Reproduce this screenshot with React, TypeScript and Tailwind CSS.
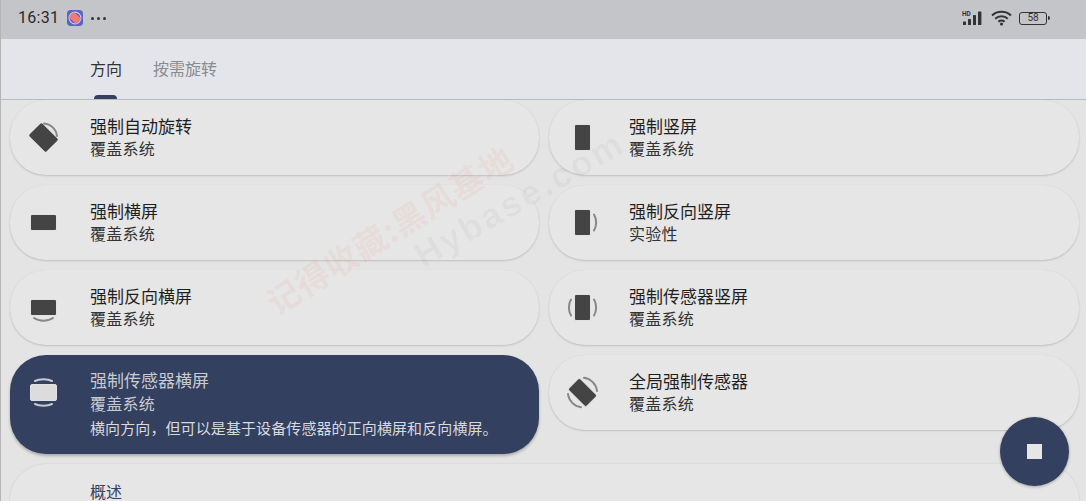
const cjk = "font-['Noto_Sans_CJK_SC','Noto_Sans',sans-serif]";

function Screen({ size, fill = "#444444" }: { size: "h" | "v"; fill?: string }) {
  const rect = size === "h" ? { x: 3.5, y: 8.5, width: 26, height: 16 } : { x: 8.5, y: 3.5, width: 16, height: 26 };
  return <rect {...rect} rx="1.5" fill={fill} stroke="#f6f6f6" strokeWidth="0.8" />;
}

function Arc({ d, color = "#888888" }: { d: string; color?: string }) {
  return <path d={d} fill="none" stroke={color} strokeWidth="2" strokeLinecap="round" />;
}

function OrientationIcon({ name, className = "" }: { name: string; className?: string }) {
  return (
    <svg width="33" height="33" viewBox="0 0 33 33" className={`shrink-0 ${className}`}>
      {name === "auto" && (
        <>
          <rect x="7.5" y="4.5" width="18" height="24" rx="1.5" fill="#444444" transform="rotate(-45 16.5 16.5)" />
          <Arc d="M17 2.5 A14 14 0 0 1 30 15" />
        </>
      )}
      {name === "portrait" && <Screen size="v" />}
      {name === "landscape" && <Screen size="h" />}
      {name === "reverseLandscape" && (
        <>
          <Screen size="h" />
          <Arc d="M7 27 C12 30.5 21 30.5 26 27" />
        </>
      )}
      {name === "reversePortrait" && (
        <>
          <Screen size="v" />
          <Arc d="M28 8.5 C30.8 13 30.8 20 28 24.5" />
        </>
      )}
      {name === "sensorPortrait" && (
        <>
          <Screen size="v" />
          <Arc d="M28 8.5 C30.8 13 30.8 20 28 24.5" />
          <Arc d="M5 24.5 C2.2 20 2.2 13 5 8.5" />
        </>
      )}
      {name === "sensorLandscape" && (
        <>
          <Screen size="h" fill="#dcdcdc" />
          <Arc d="M8 5 C12 2.8 21 2.8 25 5" color="#c8cad0" />
          <Arc d="M8 28 C12 30.2 21 30.2 25 28" color="#c8cad0" />
        </>
      )}
      {name === "fullSensor" && (
        <>
          <rect x="8.5" y="4" width="16" height="25" rx="1.5" fill="#444444" stroke="#f6f6f6" strokeWidth="0.6" transform="rotate(-45 16.5 16.5)" />
          <Arc d="M18 1.8 A15 15 0 0 1 31 15" />
          <Arc d="M15 31.2 A15 15 0 0 1 2 18" />
        </>
      )}
    </svg>
  );
}

function ModeCard({
  icon,
  title,
  sub,
  desc,
  active,
}: {
  icon: string;
  title: string;
  sub: string;
  desc?: string;
  active?: boolean;
}) {
  return (
    <div
      className={`flex items-center rounded-[36px] pl-[17px] ${
        active
          ? "h-[99px] bg-[#33405f] shadow-[0_2px_3px_rgba(0,0,0,0.25)]"
          : "h-[75px] bg-[#e6e6e6] shadow-[0_1px_2px_rgba(0,0,0,0.16),0_0_1px_rgba(0,0,0,0.06)]"
      }`}
    >
      <OrientationIcon name={icon} className={active ? "-mt-[24px]" : ""} />
      <div className={`ml-[30px] flex flex-col ${active ? "-mt-[1px]" : "-mt-[2px]"}`}>
        <div className={`text-[17px] leading-[22px] ${active ? "text-[#c9cbd1]" : "text-[#1f1f1f]"}`}>{title}</div>
        <div className={`text-[16px] leading-[22px] tracking-[0.25px] ${active ? "mt-[1px] text-[#c9cbd1]" : "text-[#333333]"}`}>
          {sub}
        </div>
        {desc && <div className="mt-[3px] text-[15px] leading-[22px] tracking-[0.1px] text-[#d9dade]">{desc}</div>}
      </div>
    </div>
  );
}

export default function App() {
  return (
    <div className={`relative flex h-[501px] w-[1086px] flex-col overflow-hidden border-l border-[#b5b5b5] bg-[#e4e4e4] ${cjk}`}>
      <div className="flex h-[39px] shrink-0 items-center bg-[#c4c5c9] pb-[3px] pl-[17px] pr-[36px] text-[#2a2a2a]">
        <span className="font-['Roboto',sans-serif] text-[16px] leading-none tracking-[0.3px]">16:31</span>
        <svg width="16" height="16" viewBox="0 0 17 17" className="ml-[8px]">
          <rect width="17" height="17" rx="4" fill="#5a62c4" />
          <circle cx="8.5" cy="8.5" r="6.3" fill="none" stroke="#c9cdf2" strokeWidth="1.2" />
          <rect x="4.5" y="3" width="8" height="11" rx="1.2" fill="#ef7a78" transform="rotate(-48 8.5 8.5)" />
        </svg>
        <span className="ml-[8px] flex gap-[3px]">
          <span className="size-[3px] rounded-full bg-[#333333]" />
          <span className="size-[3px] rounded-full bg-[#333333]" />
          <span className="size-[3px] rounded-full bg-[#333333]" />
        </span>
        <div className="ml-auto flex items-center">
          <svg width="23" height="16" viewBox="0 0 23 16">
            <text x="0" y="6" fontSize="6.5" fontWeight="700" fill="#333333" fontFamily="Roboto">HD</text>
            <rect x="1" y="11.5" width="3" height="3.5" rx="0.5" fill="#333333" />
            <rect x="6" y="9" width="3" height="6" rx="0.5" fill="#333333" />
            <rect x="11" y="5" width="3" height="10" rx="0.5" fill="#333333" />
            <rect x="16" y="1.5" width="3.4" height="13.5" rx="0.5" fill="#333333" />
          </svg>
          <svg width="21" height="16" viewBox="0 0 21 16" className="ml-[6px]">
            <path d="M1 5.5 C6 0.5 15 0.5 20 5.5" fill="none" stroke="#333333" strokeWidth="2" />
            <path d="M4.2 8.8 C7.6 5.4 13.4 5.4 16.8 8.8" fill="none" stroke="#333333" strokeWidth="2" />
            <path d="M7.4 11.8 C9 10.2 12 10.2 13.6 11.8" fill="none" stroke="#333333" strokeWidth="2" />
            <circle cx="10.5" cy="14" r="1.6" fill="#333333" />
          </svg>
          <div className="ml-[7px] flex items-center">
            <div className="flex h-[13px] w-[28px] items-center justify-center rounded-[3px] border border-[#333333] font-['Roboto',sans-serif] text-[10px] leading-none text-[#333333]">
              58
            </div>
            <div className="ml-[1px] h-[4px] w-[2px] rounded-r-sm bg-[#333333]" />
          </div>
        </div>
      </div>

      <div className="relative flex h-[61px] shrink-0 border-b border-[#b9babd] bg-[#e3e5ea] pl-[89px]">
        <div className="relative flex h-full items-center">
          <span className="-mt-[2px] text-[16px] text-[#333333]">方向</span>
          <div className="absolute bottom-0 left-[4px] h-[4px] w-[23px] rounded-t-[4px] bg-[#33405f]" />
        </div>
        <div className="ml-[31px] flex h-full items-center">
          <span className="-mt-[2px] text-[16px] text-[#8a8b8f]">按需旋转</span>
        </div>
      </div>

      <div className="grid grid-cols-[529px_530px] items-start gap-x-[10px] gap-y-[10px] pl-[9px]">
        <ModeCard icon="auto" title="强制自动旋转" sub="覆盖系统" />
        <ModeCard icon="portrait" title="强制竖屏" sub="覆盖系统" />
        <ModeCard icon="landscape" title="强制横屏" sub="覆盖系统" />
        <ModeCard icon="reversePortrait" title="强制反向竖屏" sub="实验性" />
        <ModeCard icon="reverseLandscape" title="强制反向横屏" sub="覆盖系统" />
        <ModeCard icon="sensorPortrait" title="强制传感器竖屏" sub="覆盖系统" />
        <ModeCard
          icon="sensorLandscape"
          title="强制传感器横屏"
          sub="覆盖系统"
          desc="横向方向，但可以是基于设备传感器的正向横屏和反向横屏。"
          active
        />
        <ModeCard icon="fullSensor" title="全局强制传感器" sub="覆盖系统" />
        <div className="col-span-2 flex h-[75px] rounded-t-[36px] bg-[#e6e6e6] pl-[80px] pt-[15px] shadow-[0_0_2px_rgba(0,0,0,0.12)]">
          <span className="text-[16px] leading-[24px] text-[#33405f]">概述</span>
        </div>
      </div>

      <div className="pointer-events-none absolute left-[268px] top-[288px] origin-left -rotate-[32deg] whitespace-nowrap text-[33px] font-bold leading-none tracking-[1px] text-[#f2502a]/[0.08]">
        记得收藏:黑风基地
      </div>
      <div className="pointer-events-none absolute left-[416px] top-[240px] origin-left -rotate-[30deg] whitespace-nowrap font-['Liberation_Sans',sans-serif] text-[35px] font-bold leading-none tracking-[3px] text-[#000000]/[0.04]">
        Hybase.com
      </div>

      <div className="absolute left-[999px] top-[417px] flex size-[69px] items-center justify-center rounded-full bg-[#33405f] shadow-[0_1px_3px_rgba(0,0,0,0.3)]">
        <div className="size-[15px] bg-[#e6e6e6]" />
      </div>
    </div>
  );
}
